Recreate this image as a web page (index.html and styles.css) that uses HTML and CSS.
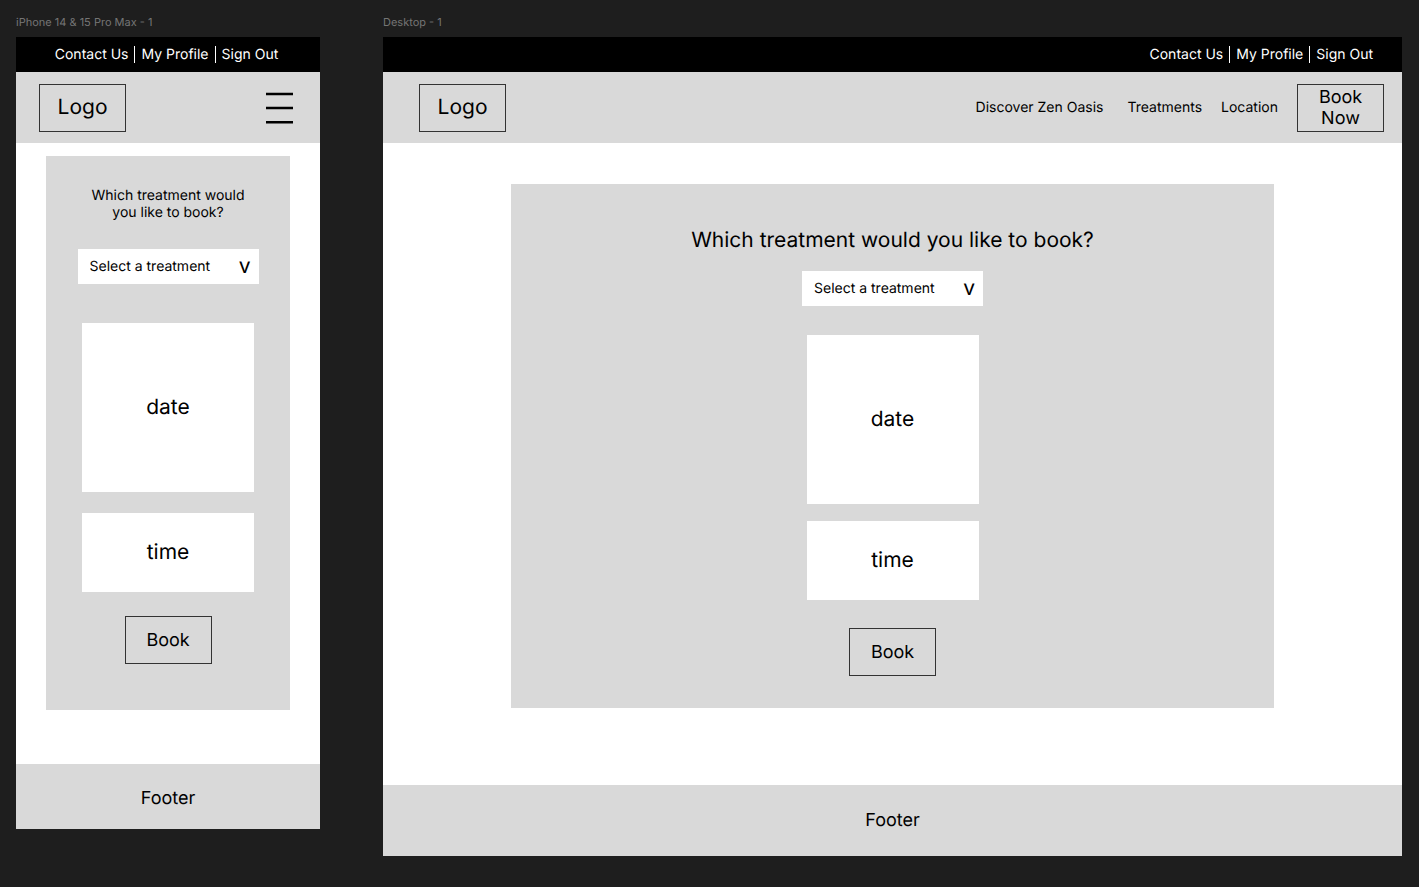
FILE: index.html
```html
<!DOCTYPE html>
<html lang="en">
<head>
<meta charset="utf-8">
<meta name="viewport" content="width=device-width, initial-scale=1">
<title>Zen Oasis booking wireframes</title>
<link rel="stylesheet" href="styles.css">
</head>
<body>
<main class="canvas">
  <section class="artboard phone">
    <h2 class="artboard-label">iPhone 14 &amp; 15 Pro Max - 1</h2>
    <div class="frame">
      <nav class="topbar">
        <a href="#">Contact Us</a><span class="divider"></span><a href="#">My Profile</a><span class="divider"></span><a href="#">Sign Out</a>
      </nav>
      <header class="header">
        <a class="box logo" href="#">Logo</a>
        <button class="menu" type="button" aria-label="Menu">
          <svg width="28" height="32" viewBox="0 0 28 32"><path d="M1 2H28M1 16H28M1 30.2H28" stroke="#000" stroke-width="2.4"/></svg>
        </button>
      </header>
      <div class="content">
        <form class="card">
          <label class="question" for="phone-treatment">Which treatment would you like to book?</label>
          <div class="picker">
            <select id="phone-treatment"><option>Select a treatment</option></select>
            <span class="arrow" aria-hidden="true">v</span>
          </div>
          <button class="slot date" type="button">date</button>
          <button class="slot time" type="button">time</button>
          <button class="box book" type="button">Book</button>
        </form>
      </div>
      <footer class="footer">Footer</footer>
    </div>
  </section>

  <section class="artboard desktop">
    <h2 class="artboard-label">Desktop - 1</h2>
    <div class="frame">
      <nav class="topbar">
        <a href="#">Contact Us</a><span class="divider"></span><a href="#">My Profile</a><span class="divider"></span><a href="#">Sign Out</a>
      </nav>
      <header class="header">
        <a class="box logo" href="#">Logo</a>
        <nav class="links">
          <a class="discover" href="#">Discover Zen Oasis</a>
          <a href="#">Treatments</a>
          <a href="#">Location</a>
          <button class="box book" type="button">Book Now</button>
        </nav>
      </header>
      <div class="content">
        <form class="card">
          <label class="question" for="desktop-treatment">Which treatment would you like to book?</label>
          <div class="picker">
            <select id="desktop-treatment"><option>Select a treatment</option></select>
            <span class="arrow" aria-hidden="true">v</span>
          </div>
          <button class="slot date" type="button">date</button>
          <button class="slot time" type="button">time</button>
          <button class="box book" type="button">Book</button>
        </form>
      </div>
      <footer class="footer">Footer</footer>
    </div>
  </section>
</main>
</body>
</html>
```
FILE: styles.css
```css
* {
  box-sizing: border-box;
}

body {
  margin: 0;
  min-height: 100vh;
  background: #1e1e1e;
  color: #000;
  font-family: Inter, "Liberation Sans", sans-serif;
  font-size: 14px;
  line-height: 17px;
  text-rendering: geometricPrecision;
}

a {
  color: inherit;
  text-decoration: none;
}

button,
select {
  margin: 0;
  padding: 0;
  border: 0;
  border-radius: 0;
  background: none;
  color: inherit;
  font: inherit;
  text-rendering: inherit;
}

.canvas {
  display: grid;
  grid-template-columns: 304px minmax(0, 1fr);
  align-items: start;
  gap: 63px;
  padding: 15px 17px 31px 16px;
}

.artboard-label {
  margin: 0 0 8px;
  color: #757575;
  font-size: 11px;
  font-weight: 400;
  line-height: 14px;
}

.frame {
  background: #fff;
}

.topbar {
  display: flex;
  align-items: center;
  justify-content: center;
  gap: 6px;
  height: 35px;
  padding-right: 3px;
  background: #000;
  color: #fff;
}

.divider {
  width: 1px;
  height: 17px;
  background: #fff;
}

.header {
  display: flex;
  align-items: center;
  justify-content: space-between;
  height: 71px;
  padding: 0 27px 0 23px;
  background: #d9d9d9;
}

.box {
  display: flex;
  align-items: center;
  justify-content: center;
  width: 87px;
  height: 48px;
  border: 1px solid #333;
  text-align: center;
}

.logo {
  font-size: 21px;
  line-height: 26px;
}

.book {
  font-size: 18px;
  line-height: 21px;
}

.menu svg {
  display: block;
}

.content {
  display: flex;
  justify-content: center;
  padding: 13px 30px 54px;
}

.card {
  display: flex;
  flex-direction: column;
  align-items: center;
  width: 100%;
  padding: 31px 0 46px;
  background: #d9d9d9;
}

.question {
  width: 170px;
  margin-bottom: 28px;
  text-align: center;
}

.picker {
  position: relative;
  width: 181px;
  height: 35px;
  margin-bottom: 39px;
}

.picker select {
  width: 100%;
  height: 100%;
  padding: 0 32px 0 12px;
  appearance: none;
  background: #fff;
}

.arrow {
  position: absolute;
  top: 5px;
  right: 8px;
  font-size: 21px;
  line-height: 26px;
  pointer-events: none;
}

.slot {
  width: 172px;
  background: #fff;
  font-size: 21px;
  line-height: 26px;
}

.date {
  height: 169px;
  margin-bottom: 21px;
}

.time {
  height: 79px;
  padding-top: 1px;
  margin-bottom: 24px;
}

.footer {
  display: flex;
  align-items: center;
  justify-content: center;
  height: 65px;
  padding-top: 5px;
  background: #d9d9d9;
  font-size: 18px;
  line-height: 22px;
}

.desktop .topbar {
  justify-content: flex-end;
  padding-right: 29px;
}

.desktop .header {
  padding: 0 18px 0 36px;
}

.links {
  display: flex;
  align-items: center;
  gap: 19px;
}

.discover {
  margin-right: 5px;
}

.links .book {
  padding: 0 20px;
}

.desktop .content {
  padding: 41px 128px 77px;
}

.desktop .card {
  padding: 44px 0 32px;
}

.desktop .question {
  width: auto;
  margin-bottom: 17px;
  font-size: 21px;
  line-height: 26px;
}

.desktop .picker {
  margin-bottom: 29px;
}

.desktop .date {
  margin-bottom: 17px;
}

.desktop .time {
  margin-bottom: 28px;
}

.desktop .footer {
  height: 71px;
  padding-top: 0;
}

@media (max-width: 1100px) {
  .canvas {
    grid-template-columns: minmax(0, 1fr);
  }
}
```
